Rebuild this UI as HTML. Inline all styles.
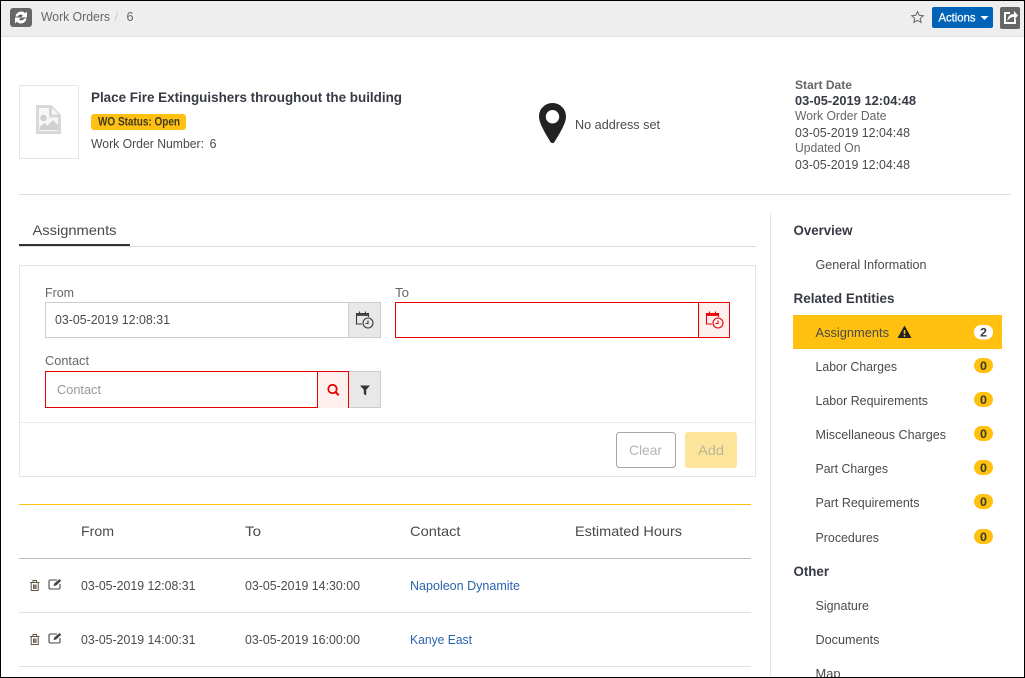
<!DOCTYPE html>
<html><head><meta charset="utf-8"><title>Work Order</title>
<style>
html,body{margin:0;padding:0;background:#fff;overflow:hidden}
svg{display:block}
text{font-family:"Liberation Sans",sans-serif;font-size:13px;fill:#4a4a4a}
.b{font-weight:bold;fill:#373a45}
.h{font-size:14px;font-weight:bold;fill:#373a45}
.t{font-size:14px;fill:#4a4a4a}
.l{fill:#666}
.n{font-size:12px;font-weight:bold;fill:#373a20}
</style></head><body>
<svg width="1025" height="678" viewBox="0 0 1025 678" xmlns="http://www.w3.org/2000/svg">
<rect width="1025" height="678" fill="#fff"/>
<!-- top bar -->
<rect x="1" y="1" width="1023" height="36" fill="#eeeeee"/>
<rect x="1" y="36" width="1023" height="1" fill="#e0e0e0"/>
<rect x="10" y="8" width="22" height="19" rx="3" fill="#666"/>
<path d="M15.500 16.500a5.700 5.700 0 0 1 9.700-3.200l1.800-1.800v6h-6l2-2a3.200 3.200 0 0 0-5.200 1z" fill="#fff"/>
<path d="M26.500 18.500a5.700 5.700 0 0 1-9.700 3.200l-1.800 1.800v-6h6l-2 2a3.200 3.200 0 0 0 5.200-1z" fill="#fff"/>
<text x="41" y="21" textLength="69" lengthAdjust="spacingAndGlyphs" class="l">Work Orders</text>
<text x="114.500" y="21" style="fill:#ccc">/</text>
<text x="126.500" y="21" textLength="7" lengthAdjust="spacingAndGlyphs" class="l">6</text>
<path d="M917.500 11.500l1.700 3.800 4.100.4-3.100 2.700.9 4-3.600-2.100-3.600 2.100.9-4-3.100-2.700 4.100-.4z" fill="none" stroke="#666" stroke-width="1"/>
<rect x="932" y="7" width="61" height="21" rx="2" fill="#0063b8"/>
<text x="938.500" y="21.500" textLength="37" lengthAdjust="spacingAndGlyphs" style="font-size:12px;fill:#fff;stroke:#fff;stroke-width:.25">Actions</text>
<path d="M980.500 16h8l-4 4z" fill="#fff"/>
<rect x="1000" y="7" width="20" height="22" rx="2" fill="#666"/>
<path d="M1010 13h-5v10h10v-4" fill="none" stroke="#fff" stroke-width="2"/>
<path d="M1007.500 21c0-4.500 2.500-7 6.500-7v-3l4 4.500-4 4.500v-3c-3 0-5 1.500-6.500 4z" fill="#fff"/>
<!-- header block -->
<rect x="19.500" y="85.500" width="59" height="73" fill="#fff" stroke="#e5e5e5"/>
<path d="M36 105h15.500l9.500 10v19H36z" fill="#d8d8d8"/>
<path d="M39 108h10v9.500h9V131H39z" fill="#f7f7f7"/>
<path d="M52 108l6.500 6.500H52z" fill="#f7f7f7"/>
<circle cx="43.500" cy="118" r="3.300" fill="#d0d0d0"/>
<path d="M39.500 130v-3l5-4 3 2.500 5.500-5.500 5 5v5z" fill="#d0d0d0"/>
<text x="91" y="102" textLength="311" lengthAdjust="spacingAndGlyphs" class="h">Place Fire Extinguishers throughout the building</text>
<rect x="91" y="114" width="95" height="16" rx="3" fill="#ffc00f"/>
<text x="98" y="125.500" textLength="82" lengthAdjust="spacingAndGlyphs" style="font-size:11.500px;font-weight:bold;fill:#3d3a20">WO Status: Open</text>
<text x="91" y="148" textLength="113" lengthAdjust="spacingAndGlyphs">Work Order Number:</text>
<text x="209.500" y="148" textLength="7" lengthAdjust="spacingAndGlyphs">6</text>
<path fill-rule="evenodd" d="M552.500 103c-7.500 0-13.500 6-13.500 13.500 0 8 9 21 11.500 25.500 1 1.500 3 1.500 4 0 2.500-4.500 11.500-17.500 11.500-25.500 0-7.500-6-13.500-13.500-13.500zm0 7a6.700 6.700 0 1 1 0 13.400 6.700 6.700 0 0 1 0-13.400z" fill="#222"/>
<text x="575" y="129" textLength="85" lengthAdjust="spacingAndGlyphs">No address set</text>
<text x="795" y="89" textLength="57" lengthAdjust="spacingAndGlyphs" style="font-size:12px;font-weight:bold;fill:#666">Start Date</text>
<text x="795" y="105" textLength="121" lengthAdjust="spacingAndGlyphs" class="b" style="font-size:12.500px">03-05-2019 12:04:48</text>
<text x="795" y="120" textLength="91.500" lengthAdjust="spacingAndGlyphs" class="l">Work Order Date</text>
<text x="795" y="137" textLength="115" lengthAdjust="spacingAndGlyphs">03-05-2019 12:04:48</text>
<text x="795" y="152" textLength="65.500" lengthAdjust="spacingAndGlyphs" class="l">Updated On</text>
<text x="795" y="169" textLength="115" lengthAdjust="spacingAndGlyphs">03-05-2019 12:04:48</text>
<rect x="19" y="194" width="992" height="1" fill="#ddd"/>
<!-- tab -->
<text x="32.500" y="235" textLength="84" lengthAdjust="spacingAndGlyphs" class="t">Assignments</text>
<rect x="19" y="246" width="737" height="1" fill="#ddd"/>
<rect x="19" y="244" width="111" height="2" fill="#333"/>
<!-- form -->
<rect x="19.500" y="265.500" width="736" height="211" fill="#fff" stroke="#e5e5e5"/>
<rect x="20" y="422" width="735" height="1" fill="#eee"/>
<text x="45" y="297" textLength="29" lengthAdjust="spacingAndGlyphs" class="l">From</text>
<rect x="45.500" y="302.500" width="303" height="35" fill="#fff" stroke="#ccc"/>
<rect x="348.500" y="302.500" width="32" height="35" fill="#e8e8e8" stroke="#ccc"/>
<text x="55" y="324" textLength="115" lengthAdjust="spacingAndGlyphs">03-05-2019 12:08:31</text>
<g fill="none" stroke="#3a3a3a" stroke-width="1.100">
<path d="M362 324h-5.500v-10.500h12v3.500M359.500 311.500v3M365.500 311.500v3"/><path d="M356.500 315h12" stroke-width="1.800"/>
<circle cx="368" cy="323" r="5" fill="#e8e8e8"/><path d="M368 320.500v3h-2.500"/>
</g>
<text x="395" y="297" textLength="14" lengthAdjust="spacingAndGlyphs" class="l">To</text>
<rect x="395.500" y="302.500" width="303" height="35" fill="#fff" stroke="#e80000"/>
<rect x="698.500" y="302.500" width="31" height="35" fill="#fff0f0" stroke="#e80000"/>
<g fill="none" stroke="#e80000" stroke-width="1.100">
<path d="M712 324h-5.500v-10.500h12v3.500M709.500 311.500v3M715.500 311.500v3"/><path d="M706.500 315h12" stroke-width="1.800"/>
<circle cx="718" cy="323" r="5" fill="#fff0f0"/><path d="M718 320.500v3h-2.500"/>
</g>
<text x="45" y="365" textLength="44" lengthAdjust="spacingAndGlyphs" class="l">Contact</text>
<rect x="45.500" y="371.500" width="272" height="36" fill="#fff" stroke="#e80000"/>
<rect x="317.500" y="371.500" width="31" height="36" fill="#fff0f0" stroke="#e80000"/>
<rect x="318" y="407" width="30" height="1" fill="#fff0f0"/>
<rect x="348.500" y="371.500" width="32" height="36" fill="#e8e8e8" stroke="#ccc"/>
<path d="M348.500 371v37" stroke="#e80000"/>
<text x="57" y="394" textLength="44" lengthAdjust="spacingAndGlyphs" style="fill:#999">Contact</text>
<circle cx="332.500" cy="389" r="4.200" fill="none" stroke="#e80000" stroke-width="1.800"/>
<path d="M335.500 392l3.300 3.300" stroke="#e80000" stroke-width="2"/>
<path d="M360 385.500h10l-3.800 4.300v5.700l-2.400-1.500v-4.200z" fill="#333"/>
<rect x="616.500" y="432.500" width="59" height="35" rx="3" fill="#fff" stroke="#a5a5a5"/>
<text x="629" y="455" textLength="33" lengthAdjust="spacingAndGlyphs" class="t" style="fill:#b5b5b5">Clear</text>
<rect x="685" y="432" width="52" height="36" rx="3" fill="#fde49b"/>
<text x="698" y="455" textLength="26" lengthAdjust="spacingAndGlyphs" class="t" style="fill:#bcb598">Add</text>
<!-- table -->
<rect x="19" y="504" width="732" height="1" fill="#ffc00f"/>
<rect x="19" y="558" width="732" height="1" fill="#bbb"/>
<rect x="19" y="612" width="732" height="1" fill="#e2e2e2"/>
<rect x="19" y="666" width="732" height="1" fill="#e2e2e2"/>
<text x="81" y="536" textLength="33" lengthAdjust="spacingAndGlyphs" class="t">From</text>
<text x="245" y="536" textLength="16" lengthAdjust="spacingAndGlyphs" class="t">To</text>
<text x="410" y="536" textLength="50.500" lengthAdjust="spacingAndGlyphs" class="t">Contact</text>
<text x="575" y="536" textLength="107" lengthAdjust="spacingAndGlyphs" class="t">Estimated Hours</text>
<g>
<path d="M30 582.500h9.500M33 582v-1.500h3.500v1.500M31.200 583v7.500h7v-7.500M33.500 584.500v4.500M34.800 584.500v4.500M36 584.500v4.500" fill="none" stroke="#5f5443" stroke-width="1"/>
<path d="M57 580h-6.500a1.500 1.500 0 0 0-1.500 1.500v6a1.500 1.500 0 0 0 1.500 1.500h8a1.500 1.500 0 0 0 1.500-1.500v-3.500" fill="none" stroke="#444" stroke-width="1.100"/>
<path d="M53.500 586l.7-2.500 5.300-4.500 1.700 1.700-5 4.800z" fill="#444"/>
</g>
<text x="81" y="590" textLength="114.500" lengthAdjust="spacingAndGlyphs">03-05-2019 12:08:31</text>
<text x="245" y="590" textLength="115" lengthAdjust="spacingAndGlyphs">03-05-2019 14:30:00</text>
<text x="410" y="590" textLength="110" lengthAdjust="spacingAndGlyphs" style="fill:#2a63ad">Napoleon Dynamite</text>
<g transform="translate(0 54)">
<path d="M30 582.500h9.500M33 582v-1.500h3.500v1.500M31.200 583v7.500h7v-7.500M33.500 584.500v4.500M34.800 584.500v4.500M36 584.500v4.500" fill="none" stroke="#5f5443" stroke-width="1"/>
<path d="M57 580h-6.500a1.500 1.500 0 0 0-1.500 1.500v6a1.500 1.500 0 0 0 1.500 1.500h8a1.500 1.500 0 0 0 1.500-1.500v-3.500" fill="none" stroke="#444" stroke-width="1.100"/>
<path d="M53.500 586l.7-2.500 5.300-4.500 1.700 1.700-5 4.800z" fill="#444"/>
</g>
<text x="81" y="644" textLength="114.500" lengthAdjust="spacingAndGlyphs">03-05-2019 14:00:31</text>
<text x="245" y="644" textLength="115" lengthAdjust="spacingAndGlyphs">03-05-2019 16:00:00</text>
<text x="410" y="644" textLength="62" lengthAdjust="spacingAndGlyphs" style="fill:#2a63ad">Kanye East</text>
<!-- sidebar -->
<rect x="770" y="213" width="1" height="465" fill="#e5e5e5"/>
<text x="793.500" y="235" textLength="59" lengthAdjust="spacingAndGlyphs" class="h">Overview</text>
<text x="815.500" y="269" textLength="111" lengthAdjust="spacingAndGlyphs">General Information</text>
<text x="793.500" y="303" textLength="101" lengthAdjust="spacingAndGlyphs" class="h">Related Entities</text>
<rect x="793" y="315" width="209" height="34" fill="#ffc00f"/>
<text x="815.500" y="337" textLength="73.500" lengthAdjust="spacingAndGlyphs">Assignments</text>
<path d="M904.500 325.500l7 12.500h-14z" fill="#222"/>
<path d="M904.500 330v4M904.500 335v1.800" stroke="#ffc00f" stroke-width="1.500"/>
<rect x="974" y="325" width="19" height="14.500" rx="7" fill="#fff"/>
<text x="980" y="336.500" textLength="7" lengthAdjust="spacingAndGlyphs" class="n" style="fill:#373a45">2</text>
<text x="815.500" y="371" textLength="81.500" lengthAdjust="spacingAndGlyphs">Labor Charges</text>
<text x="815.500" y="405" textLength="112.500" lengthAdjust="spacingAndGlyphs">Labor Requirements</text>
<text x="815.500" y="439" textLength="130.500" lengthAdjust="spacingAndGlyphs">Miscellaneous Charges</text>
<text x="815.500" y="473" textLength="72.500" lengthAdjust="spacingAndGlyphs">Part Charges</text>
<text x="815.500" y="507" textLength="104" lengthAdjust="spacingAndGlyphs">Part Requirements</text>
<text x="815.500" y="542" textLength="63.500" lengthAdjust="spacingAndGlyphs">Procedures</text>
<rect x="974" y="358" width="19" height="15" rx="7.500" fill="#ffc00f"/><text x="980" y="370" textLength="7" lengthAdjust="spacingAndGlyphs" class="n">0</text>
<rect x="974" y="392" width="19" height="15" rx="7.500" fill="#ffc00f"/><text x="980" y="404" textLength="7" lengthAdjust="spacingAndGlyphs" class="n">0</text>
<rect x="974" y="426" width="19" height="15" rx="7.500" fill="#ffc00f"/><text x="980" y="438" textLength="7" lengthAdjust="spacingAndGlyphs" class="n">0</text>
<rect x="974" y="460" width="19" height="15" rx="7.500" fill="#ffc00f"/><text x="980" y="472" textLength="7" lengthAdjust="spacingAndGlyphs" class="n">0</text>
<rect x="974" y="494" width="19" height="15" rx="7.500" fill="#ffc00f"/><text x="980" y="506" textLength="7" lengthAdjust="spacingAndGlyphs" class="n">0</text>
<rect x="974" y="529" width="19" height="15" rx="7.500" fill="#ffc00f"/><text x="980" y="541" textLength="7" lengthAdjust="spacingAndGlyphs" class="n">0</text>
<text x="793.500" y="576" textLength="35.500" lengthAdjust="spacingAndGlyphs" class="h">Other</text>
<text x="815.500" y="610" textLength="53.500" lengthAdjust="spacingAndGlyphs">Signature</text>
<text x="815.500" y="644" textLength="64" lengthAdjust="spacingAndGlyphs">Documents</text>
<text x="815.500" y="678" textLength="25" lengthAdjust="spacingAndGlyphs">Map</text>
<!-- outer frame -->
<rect x="0" y="0" width="1025" height="1" fill="#000"/>
<rect x="0" y="0" width="1" height="678" fill="#000"/>
<rect x="1024" y="0" width="1" height="678" fill="#000"/>
<rect x="0" y="677" width="1025" height="1" fill="#000"/>
</svg>
</body></html>
